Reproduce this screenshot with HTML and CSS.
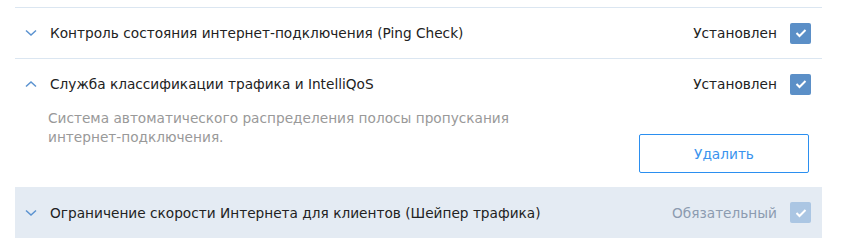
FILE: index.html
```html
<!DOCTYPE html>
<html lang="ru">
<head>
<meta charset="utf-8">
<link rel="stylesheet" href="styles.css">
</head>
<body>
<div class="list">
  <div class="row">
    <div class="head">
      <svg class="chev" width="12" height="8" viewBox="0 0 12 8"><path d="M1 1.5 L6 6 L11 1.5" fill="none" stroke="#5b93d0" stroke-width="1.5"/></svg>
      <span class="title">Контроль состояния интернет-подключения (Ping Check)</span>
      <span class="status">Установлен</span>
      <span class="check"><svg width="12" height="10" viewBox="0 0 12 10"><path d="M1.5 5 L4.5 8 L10.5 2" fill="none" stroke="#fff" stroke-width="2"/></svg></span>
    </div>
  </div>
  <div class="row open">
    <div class="head">
      <svg class="chev" width="12" height="8" viewBox="0 0 12 8"><path d="M1 6.5 L6 2 L11 6.5" fill="none" stroke="#5b93d0" stroke-width="1.5"/></svg>
      <span class="title">Служба классификации трафика и IntelliQoS</span>
      <span class="status">Установлен</span>
      <span class="check"><svg width="12" height="10" viewBox="0 0 12 10"><path d="M1.5 5 L4.5 8 L10.5 2" fill="none" stroke="#fff" stroke-width="2"/></svg></span>
    </div>
    <div class="body">
      <p class="desc">Система автоматического распределения полосы пропускания интернет-подключения.</p>
      <button class="btn">Удалить</button>
    </div>
  </div>
  <div class="row required">
    <div class="head">
      <svg class="chev" width="12" height="8" viewBox="0 0 12 8"><path d="M1 1.5 L6 6 L11 1.5" fill="none" stroke="#5b93d0" stroke-width="1.5"/></svg>
      <span class="title">Ограничение скорости Интернета для клиентов (Шейпер трафика)</span>
      <span class="status muted">Обязательный</span>
      <span class="check disabled"><svg width="12" height="10" viewBox="0 0 12 10"><path d="M1.5 5 L4.5 8 L10.5 2" fill="none" stroke="#fff" stroke-width="2"/></svg></span>
    </div>
  </div>
</div>
</body>
</html>
```

FILE: styles.css
```css
html, body {
  margin: 0;
  padding: 0;
  background: #fff;
}
body {
  font-family: "DejaVu Sans", Verdana, sans-serif;
  font-size: 13.7px;
  color: #222;
}
.list {
  margin: 7px 0 0 15px;
  width: 807px;
  border-top: 1px solid #dbe6f1;
}
.row {
  border-bottom: 1px solid #dbe6f1;
}
.row.open {
  border-bottom: none;
}
.head {
  height: 50px;
  display: flex;
  align-items: center;
  padding: 0 11px 0 10px;
}
.chev {
  flex: none;
  margin-right: 13px;
}
.title {
  flex: 1;
}
.status {
  margin-right: 13px;
}
.status.muted {
  color: #8c9bb0;
}
.check {
  width: 21px;
  height: 21px;
  border-radius: 2px;
  background: #5b8fc7;
  display: flex;
  align-items: center;
  justify-content: center;
}
.check.disabled {
  background: #abc6e3;
}
.body {
  display: flex;
  align-items: flex-start;
  padding: 0 13px 14px 33px;
}
.desc {
  flex: 1;
  margin: 0;
  color: #999;
  line-height: 19px;
  max-width: 480px;
}
.btn {
  margin-left: auto;
  margin-top: 25px;
  width: 170px;
  height: 39px;
  border: 1px solid #2b8ff0;
  border-radius: 2px;
  background: #fff;
  color: #3a93ee;
  font-family: inherit;
  font-size: 13.7px;
}
.row.required {
  background: #e4ebf3;
  border-bottom: none;
}
.row.required .head {
  height: 51px;
}
```
